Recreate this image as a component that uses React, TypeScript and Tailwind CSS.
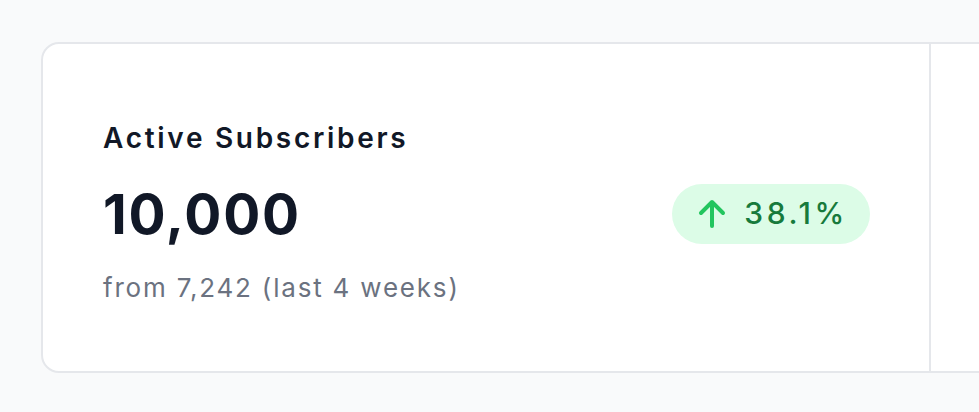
import React from 'react';

const ArrowUp: React.FC = () => (
    <svg viewBox="0 0 28 30" className="h-[30px] w-[28px] text-[#22c55e]" fill="none" stroke="currentColor" strokeWidth={4} strokeLinecap="round" strokeLinejoin="round">
        <path d="M14 27V4" />
        <path d="M3 14L14 3l11 11" />
    </svg>
);

interface Stat {
    name: string;
    value: string;
    previous: string;
    change: string;
}

const stats: Stat[] = [
    { name: 'Active Subscribers', value: '10,000', previous: '7,242', change: '38.1%' },
];

const App: React.FC = () => {
    return (
        <div className="h-[412px] w-full overflow-hidden bg-[#f9fafb] pl-[41px] pt-[42px]" style={{ fontFamily: 'Inter, "Noto Sans", sans-serif' }}>
            <div className="flex h-[331px] w-[1200px] rounded-[18px] border-2 border-[#e5e7eb] bg-white">
                {stats.map((stat) => (
                    <div key={stat.name} className="flex w-[888px] items-center justify-between border-r-2 border-[#e5e7eb] pl-[60px] pr-[59px]">
                        <div className="flex flex-col pt-[9px]">
                            <div className="text-[28px] font-semibold leading-[36px] tracking-[2.7px] text-[#111827]">{stat.name}</div>
                            <div className="mt-[28px] text-[55px] font-bold leading-[60px] tracking-[1.8px] text-[#111827]">{stat.value}</div>
                            <div className="mt-[27px] text-[26px] leading-[34px] tracking-[1.8px] text-[#6b7280]">from {stat.previous} (last 4 weeks)</div>
                        </div>
                        <div className="mt-[12px] flex h-[60px] items-center gap-[18px] rounded-full bg-[#dcfce7] pl-[26px] pr-[22px]">
                            <ArrowUp />
                            <span className="text-[30px] font-medium tracking-[3.6px] text-[#177a3c]">{stat.change}</span>
                        </div>
                    </div>
                ))}
                <div className="flex-1" />
            </div>
        </div>
    );
};

export default App;
